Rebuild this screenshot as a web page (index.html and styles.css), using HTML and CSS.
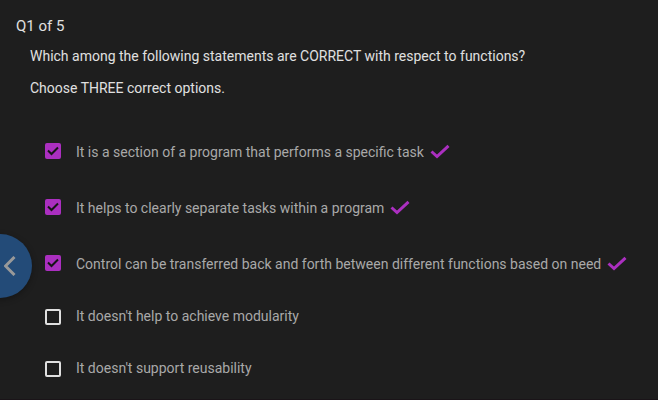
FILE: index.html
```html
<!DOCTYPE html>
<html lang="en">
<head>
<meta charset="utf-8">
<meta name="viewport" content="width=device-width, initial-scale=1">
<title>Quiz</title>
<link rel="stylesheet" href="styles.css">
</head>
<body>
<main class="quiz">
  <h1 class="progress">Q1 of 5</h1>
  <form class="question">
    <p class="prompt">Which among the following statements are CORRECT with respect to functions?</p>
    <p class="prompt">Choose THREE correct options.</p>
    <div class="options">
      <label class="option correct">
        <input class="box" type="checkbox" checked>
        <span>It is a section of a program that performs a specific task</span>
        <svg class="tick" viewBox="0 0 20 16" aria-hidden="true"><path d="M1.5 7.5 7 12.5 18.5 1.8"/></svg>
      </label>
      <label class="option correct">
        <input class="box" type="checkbox" checked>
        <span>It helps to clearly separate tasks within a program</span>
        <svg class="tick" viewBox="0 0 20 16" aria-hidden="true"><path d="M1.5 7.5 7 12.5 18.5 1.8"/></svg>
      </label>
      <label class="option correct">
        <input class="box" type="checkbox" checked>
        <span>Control can be transferred back and forth between different functions based on need</span>
        <svg class="tick" viewBox="0 0 20 16" aria-hidden="true"><path d="M1.5 7.5 7 12.5 18.5 1.8"/></svg>
      </label>
      <label class="option">
        <input class="box" type="checkbox">
        <span>It doesn't help to achieve modularity</span>
      </label>
      <label class="option">
        <input class="box" type="checkbox">
        <span>It doesn't support reusability</span>
      </label>
    </div>
  </form>
</main>
<button class="previous" type="button" aria-label="Previous question">
  <svg class="chevron" viewBox="0 0 12 20" aria-hidden="true"><path d="M10.5 1 1.5 10l9 9"/></svg>
</button>
</body>
</html>
```
FILE: styles.css
```css
* {
  box-sizing: border-box;
}

body {
  min-height: 100vh;
  margin: 0;
  border-bottom: 1px solid #1a1418;
  background: #1e1e1e;
  color: #e0e0e0;
  font: 14px/24px Roboto, sans-serif;
}

.quiz {
  padding: 14px 16px 16px;
}

.progress {
  margin: 0;
  font-size: 15px;
  font-weight: 400;
}

.question {
  padding: 6px 0 0 14px;
}

.prompt {
  margin: 0 0 8px;
}

.options {
  display: flex;
  flex-direction: column;
  gap: 28px;
  padding: 28px 0 0 15px;
}

.option {
  display: flex;
  align-items: flex-start;
  color: #a9a9a9;
}

.correct {
  padding-top: 4px;
}

.box {
  appearance: none;
  flex: none;
  width: 16px;
  height: 16px;
  margin: 5px 15px 0 0;
  border: 2px solid #e0e0e0;
  border-radius: 2px;
}

.correct .box {
  margin-top: 3px;
}

.box:checked {
  border: 0;
  background: #ab2fc0 url("data:image/svg+xml,%3Csvg xmlns='http://www.w3.org/2000/svg' viewBox='0 0 16 16'%3E%3Cpath d='M3 7.5 6.5 11 13 4.5' fill='none' stroke='%23151515' stroke-width='2'/%3E%3C/svg%3E") center / 16px;
}

.tick {
  flex: none;
  width: 20px;
  height: 16px;
  margin: 4px 0 0 6px;
  fill: none;
  stroke: #ab2fc0;
  stroke-width: 3;
}

.previous {
  position: fixed;
  top: 234px;
  left: -32px;
  display: flex;
  align-items: center;
  justify-content: flex-end;
  width: 64px;
  height: 64px;
  padding: 0 16px 0 0;
  border: 0;
  border-radius: 50%;
  background: #234b78;
  box-shadow: 0 2px 6px rgb(0 0 0 / 30%);
}

.chevron {
  width: 12px;
  height: 20px;
  fill: none;
  stroke: #999;
  stroke-width: 3;
}
```
